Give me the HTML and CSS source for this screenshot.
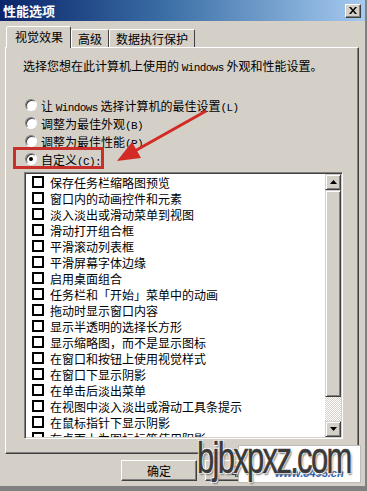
FILE: index.html
```html
<!DOCTYPE html>
<html lang="zh-CN">
<head>
  <meta charset="UTF-8">
  <title>性能选项</title>
  <link rel="stylesheet" href="styles.css">
</head>
<body>
  <div class="win">
    <div class="titlebar">
      <span class="title">性能选项</span>
      <div class="close">
        <svg width="8" height="7" viewBox="0 0 8 7"><path d="M0 0h2l2 2.5L6 0h2L5 3.5 8 7H6L4 4.5 2 7H0l3-3.5z" fill="#000"/></svg>
      </div>
    </div>

    <div class="tabs">
      <div class="tab active">视觉效果</div>
      <div class="tab">高级</div>
      <div class="tab">数据执行保护</div>
    </div>

    <div class="panel">
      <p class="desc">选择您想在此计算机上使用的 <span class="mono">Windows</span> 外观和性能设置。</p>

      <div class="radios">
        <div class="radio-row"><span class="radio"></span><span>让 <span class="mono">Windows</span> 选择计算机的最佳设置<span class="mono">(L)</span></span></div>
        <div class="radio-row"><span class="radio"></span><span>调整为最佳外观<span class="mono">(B)</span></span></div>
        <div class="radio-row"><span class="radio"></span><span>调整为最佳性能<span class="mono">(P)</span></span></div>
        <div class="radio-row"><span class="radio checked"></span><span>自定义<span class="mono">(C):</span></span></div>
      </div>

      <div class="listbox">
        <ul class="items">
          <li><span class="check"></span>保存任务栏缩略图预览</li>
          <li><span class="check"></span>窗口内的动画控件和元素</li>
          <li><span class="check"></span>淡入淡出或滑动菜单到视图</li>
          <li><span class="check"></span>滑动打开组合框</li>
          <li><span class="check"></span>平滑滚动列表框</li>
          <li><span class="check"></span>平滑屏幕字体边缘</li>
          <li><span class="check"></span>启用桌面组合</li>
          <li><span class="check"></span>任务栏和<span class="jp">「开始」</span>菜单中的动画</li>
          <li><span class="check"></span>拖动时显示窗口内容</li>
          <li><span class="check"></span>显示半透明的选择长方形</li>
          <li><span class="check"></span>显示缩略图，而不是显示图标</li>
          <li><span class="check"></span>在窗口和按钮上使用视觉样式</li>
          <li><span class="check"></span>在窗口下显示阴影</li>
          <li><span class="check"></span>在单击后淡出菜单</li>
          <li><span class="check"></span>在视图中淡入淡出或滑动工具条提示</li>
          <li><span class="check"></span>在鼠标指针下显示阴影</li>
          <li><span class="check"></span>在桌面上为图标标签使用阴影</li>
        </ul>
        <div class="scrollbar">
          <div class="sb-btn"><svg width="7" height="4" viewBox="0 0 7 4"><path d="M3.5 0L7 4H0z" fill="#000"/></svg></div>
          <div class="sb-thumb"></div>
          <div class="sb-track"></div>
          <div class="sb-btn"><svg width="7" height="4" viewBox="0 0 7 4"><path d="M0 0h7L3.5 4z" fill="#000"/></svg></div>
        </div>
      </div>
    </div>

    <div class="footer">
      <div class="btn">确定</div>
      <div class="btn">取消</div>
    </div>

    <!-- annotation drawn over the screenshot -->
    <div class="redbox"></div>
    <svg class="arrow" width="367" height="491" viewBox="0 0 367 491">
      <line x1="206" y1="111" x2="133" y2="152" stroke="#d42a26" stroke-width="3"/>
      <polygon points="117,161 141,158 132,142" fill="#d42a26"/>
    </svg>

    <!-- watermark -->
    <div class="mark-box">
      <span class="mark-small">www.8495.cn</span>
    </div>
    <div class="mark-text">bjbxpxz.com</div>
  </div>
</body>
</html>
```

FILE: styles.css
```css
body {
  margin: 0;
  background: #d4d0c8;
  font-family: "Noto Sans CJK SC", sans-serif;
  font-size: 12px;
  color: #000;
}
.mono {
  font-family: "Liberation Mono", monospace;
  font-size: 11px;
  letter-spacing: -0.6px;
}
.jp {
  font-family: "Noto Sans CJK JP", sans-serif;
}
.win {
  position: relative;
  width: 367px;
  height: 491px;
  box-sizing: border-box;
  background: #d4d0c8;
  border-right: 2px solid #808080;
  border-bottom: 5px solid #808080;
  overflow: hidden;
}
.titlebar {
  height: 21px;
  background: linear-gradient(to right, #0a246a, #3a6ea5 45%, #a6caf0);
  display: flex;
  align-items: center;
  justify-content: space-between;
  padding: 0 4px 0 3px;
}
.title {
  color: #fff;
  font-weight: bold;
  font-size: 13px;
  line-height: 14px;
}
.close {
  width: 16px;
  height: 14px;
  box-sizing: border-box;
  background: #d4d0c8;
  border: 1px solid;
  border-color: #fff #404040 #404040 #fff;
  box-shadow: inset -1px -1px #808080;
  display: flex;
  align-items: center;
  justify-content: center;
}
.tabs {
  display: flex;
  align-items: flex-end;
  height: 22px;
  margin-top: 4px;
  padding-left: 8px;
}
.tab {
  height: 18px;
  line-height: 18px;
  padding: 0 6px;
  border: 1px solid;
  border-bottom: none;
  border-color: #fff #404040 transparent #fff;
  border-radius: 2px 2px 0 0;
  box-sizing: border-box;
  font-size: 12px;
}
.tab.active {
  height: 22px;
  line-height: 20px;
  padding: 0 7px 0 8px;
  margin-left: -2px;
  position: relative;
  top: 1px;
  background: #d4d0c8;
  z-index: 1;
}
.panel {
  margin: 0 6px 0 5px;
  height: 407px;
  box-sizing: border-box;
  border: 1px solid;
  border-color: #fff #404040 #404040 #fff;
  box-shadow: inset -1px -1px #808080;
  padding: 11px 0 0 18px;
}
.desc {
  margin: 0 0 21px -1px;
  line-height: 14px;
  white-space: nowrap;
}
.radios {
  display: flex;
  flex-direction: column;
}
.radio-row {
  height: 18px;
  display: flex;
  align-items: center;
  padding-left: 1px;
  white-space: nowrap;
}
.radio {
  width: 12px;
  height: 12px;
  margin-right: 4px;
  box-sizing: border-box;
  border-radius: 50%;
  border: 1px solid;
  border-color: #808080 #fff #fff #808080;
  background: #fff;
  box-shadow: inset 1px 1px #404040;
  display: flex;
  align-items: center;
  justify-content: center;
}
.radio.checked::after {
  content: "";
  width: 4px;
  height: 4px;
  border-radius: 50%;
  background: #000;
}
.listbox {
  margin-top: 4px;
  width: 319px;
  height: 267px;
  box-sizing: border-box;
  border: 1px solid;
  border-color: #808080 #fff #fff #808080;
  box-shadow: inset 1px 1px #404040, inset -1px -1px #d4d0c8;
  padding: 1px;
  display: flex;
  background: #fff;
}
.items {
  flex: 1;
  list-style: none;
  margin: 0;
  padding: 0 0 0 6px;
  overflow: hidden;
}
.items li {
  height: 16px;
  display: flex;
  align-items: center;
  white-space: nowrap;
  font-size: 12px;
}
.check {
  width: 12px;
  height: 12px;
  margin-right: 6px;
  box-sizing: border-box;
  border: 2px solid #000;
  background: #fff;
  flex-shrink: 0;
}
.scrollbar {
  width: 16px;
  display: flex;
  flex-direction: column;
}
.sb-btn,
.sb-thumb {
  box-sizing: border-box;
  background: #d4d0c8;
  border: 1px solid;
  border-color: #d4d0c8 #404040 #404040 #d4d0c8;
  box-shadow: inset 1px 1px #fff, inset -1px -1px #808080;
}
.sb-btn {
  height: 16px;
  display: flex;
  align-items: center;
  justify-content: center;
}
.sb-thumb {
  height: 207px;
}
.sb-track {
  flex: 1;
  background-color: #fff;
  background-image: repeating-conic-gradient(#d4d0c8 0 25%, #fff 0 50%);
  background-size: 2px 2px;
}
.footer {
  display: flex;
  gap: 8px;
  padding: 6px 0 0 121px;
}
.btn {
  width: 76px;
  height: 21px;
  box-sizing: border-box;
  border: 1px solid;
  border-color: #fff #404040 #404040 #fff;
  box-shadow: inset -1px -1px #808080;
  text-align: center;
  line-height: 19px;
}
.redbox {
  position: absolute;
  left: 13px;
  top: 147px;
  width: 91px;
  height: 22px;
  box-sizing: border-box;
  border: 3px solid #c9302c;
}
.arrow {
  position: absolute;
  left: 0;
  top: 0;
}
.mark-box {
  position: absolute;
  left: 238px;
  top: 445px;
  width: 123px;
  height: 38px;
  background: #fff;
  border: 1px solid #bbb;
  box-sizing: border-box;
}
.mark-small {
  position: absolute;
  left: 36px;
  top: 21px;
  font-family: "Liberation Sans", sans-serif;
  font-size: 11px;
  font-weight: bold;
  font-style: italic;
  color: #2a62b8;
}
.mark-text {
  position: absolute;
  left: 197px;
  top: 435px;
  font-family: "Liberation Sans", sans-serif;
  font-size: 45px;
  line-height: 45px;
  letter-spacing: -2.5px;
  color: #3a3a3a;
  -webkit-text-stroke: 0.6px #3a3a3a;
  transform: scaleX(0.69);
  transform-origin: left top;
  text-shadow: 1px 1px 0 #fff, -1px -1px 0 #fff, 1px -1px 0 #fff, -1px 1px 0 #fff, 2px 2px 2px #777;
}
```
